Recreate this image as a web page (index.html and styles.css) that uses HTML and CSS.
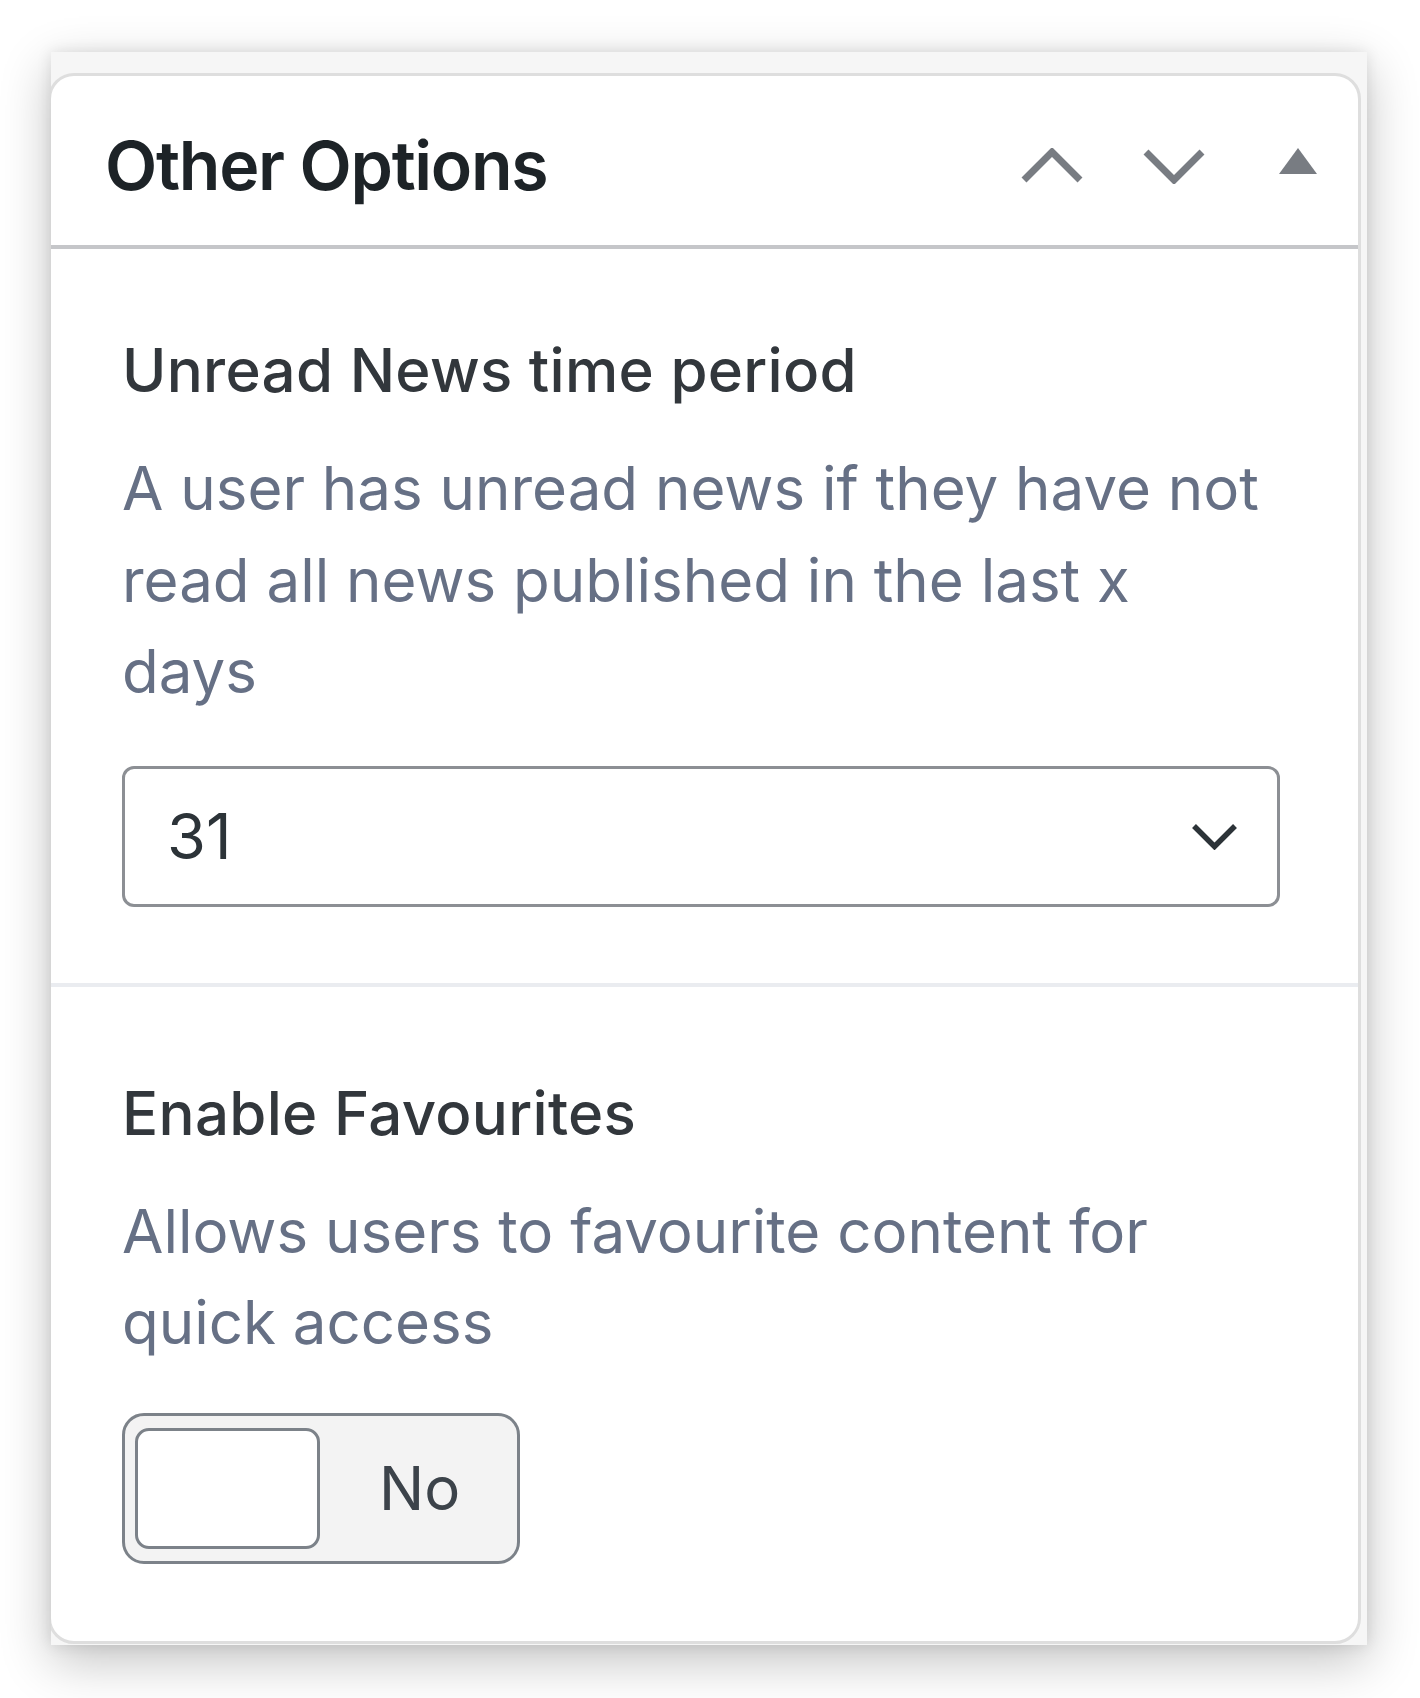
FILE: index.html
```html
<!DOCTYPE html>
<html lang="en">
<head>
<meta charset="utf-8">
<title>Other Options</title>
<link rel="stylesheet" href="styles.css">
</head>
<body>
<div class="frame">
  <div class="card">
    <div class="card-header">
      <h2 class="card-title">Other Options</h2>
      <div class="card-actions">
        <svg class="icon icon-chevron" width="64" height="36" viewBox="0 0 64 36"><polyline points="4,32 32,4 60,32"/></svg>
        <svg class="icon icon-chevron icon-down" width="64" height="36" viewBox="0 0 64 36"><polyline points="4,4 32,32 60,4"/></svg>
        <svg class="icon icon-triangle" width="38" height="36" viewBox="0 0 38 36"><polygon points="19,0 38,26 0,26"/></svg>
      </div>
    </div>
    <div class="field">
      <label class="field-label">Unread News time period</label>
      <p class="field-desc">A user has unread news if they have not read all news published in the last x days</p>
      <div class="select">
        <span class="select-value">31</span>
        <svg class="select-chevron" width="47" height="27" viewBox="0 0 47 27"><polyline points="3,3 23.5,23.5 44,3"/></svg>
      </div>
    </div>
    <div class="field field-last">
      <label class="field-label">Enable Favourites</label>
      <p class="field-desc field-desc-short">Allows users to favourite content for quick access</p>
      <div class="toggle">
        <span class="toggle-knob"></span>
        <span class="toggle-text">No</span>
      </div>
    </div>
  </div>
</div>
</body>
</html>
```
FILE: styles.css
```css
html, body {
  margin: 0;
  padding: 0;
  background: #ffffff;
}

body {
  font-family: Inter, "Noto Sans", sans-serif;
  padding: 52px 0 53px 51px;
  min-height: 1698px;
  box-sizing: border-box;
}

.frame {
  width: 1316px;
  height: 1593px;
  box-sizing: border-box;
  padding-top: 21px;
  background: #f6f6f6;
  overflow: hidden;
  box-shadow: 0 16px 48px rgba(0, 0, 0, 0.24), 0 0 14px rgba(0, 0, 0, 0.1);
}

.card {
  margin-left: -3px;
  width: 1313px;
  box-sizing: border-box;
  background: #ffffff;
  border: 3px solid #dedede;
  border-radius: 26px;
}

.card-header {
  display: flex;
  align-items: center;
  height: 173px;
  box-sizing: border-box;
  padding: 8px 41px 0 54px;
  border-bottom: 4px solid #c5c6c9;
}

.card-title {
  margin: 0;
  font-size: 68px;
  font-weight: 600;
  line-height: 1;
  letter-spacing: -1.3px;
  color: #1d2327;
}

.card-actions {
  margin-left: auto;
  margin-top: 2px;
  display: flex;
  align-items: flex-start;
}

.icon {
  display: block;
}

.icon-chevron polyline {
  fill: none;
  stroke: #787c82;
  stroke-width: 7;
}

.icon-down {
  margin-left: 58px;
}

.icon-triangle {
  margin-left: 73px;
}

.icon-triangle polygon {
  fill: #787c82;
}

.field {
  padding: 76px 78px 76px 71px;
  border-bottom: 4px solid #eaecf0;
}

.field-last {
  padding-top: 81px;
  padding-bottom: 77px;
  border-bottom: none;
}

.field-label {
  display: block;
  font-size: 60px;
  font-weight: 500;
  line-height: 90px;
  letter-spacing: 0.3px;
  color: #32373c;
  margin-bottom: 28px;
}

.field-desc {
  margin: 0 0 48px;
  font-size: 60px;
  font-weight: 400;
  line-height: 91.5px;
  color: #667085;
  max-width: 1145px;
}

.field-desc-short {
  margin-bottom: 44px;
}

.select {
  display: flex;
  align-items: center;
  height: 141px;
  box-sizing: border-box;
  padding: 0 39px 0 42px;
  border: 3px solid #8c8f94;
  border-radius: 12px;
  background: #ffffff;
}

.select-value {
  font-size: 63px;
  line-height: 1;
  color: #2c3338;
}

.select-chevron {
  display: block;
  margin-left: auto;
}

.select-chevron polyline {
  fill: none;
  stroke: #2c3338;
  stroke-width: 5.5;
}

.toggle {
  display: flex;
  align-items: center;
  width: 398px;
  height: 151px;
  box-sizing: border-box;
  padding-left: 10px;
  border: 3px solid #7c8289;
  border-radius: 22px;
  background: #f3f3f3;
}

.toggle-knob {
  display: block;
  width: 185px;
  height: 121px;
  box-sizing: border-box;
  border: 3px solid #7c8289;
  border-radius: 14px;
  background: #ffffff;
}

.toggle-text {
  margin-left: 59px;
  font-size: 60px;
  line-height: 1;
  color: #3c434a;
}
```
